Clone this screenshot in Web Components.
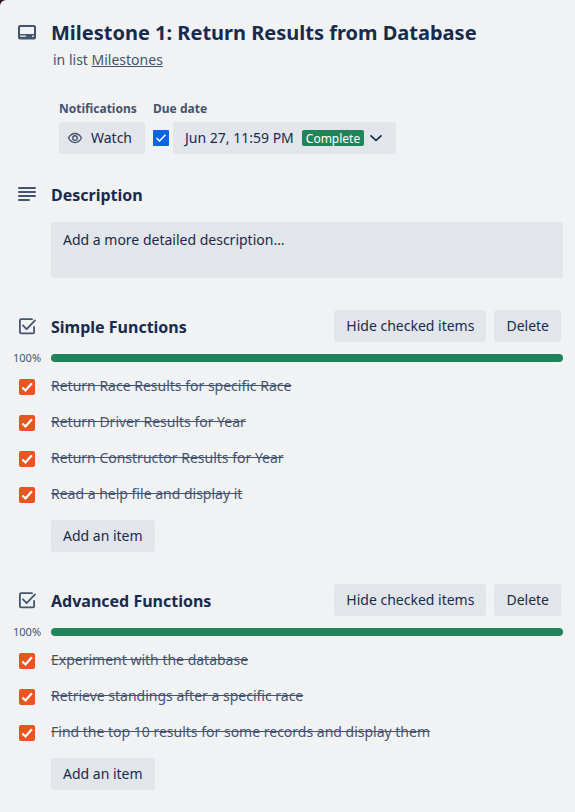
<!DOCTYPE html>
<html lang="en">
<head>
<meta charset="utf-8">
<title>Milestone 1: Return Results from Database</title>
<style>
html{background:#2c0f1e}
body{margin:0;font:400 14px/20px "Noto Sans",sans-serif;color:#172b4d}
</style>
</head>
<body>
<card-detail></card-detail>
<script>
function define(name, html) {
  const template = document.createElement('template');
  template.innerHTML = html;
  customElements.define(name, class extends HTMLElement {
    constructor() {
      super();
      this.attachShadow({ mode: 'open' }).append(template.content.cloneNode(true));
    }
  });
}

define('soft-button', `
<style>
:host{display:inline-flex;box-sizing:border-box;height:32px;padding:0 12px;align-items:center;border-radius:3px;background:#e2e5e9;white-space:nowrap}
</style><slot></slot>`);

define('check-mark', `
<style>
:host{display:block;width:16px;height:16px;border-radius:2px;background:#e95420;flex:none}
svg{display:block}
path{fill:none;stroke:#fff;stroke-width:2.2}
</style><svg width="16" height="16" viewBox="0 0 16 16"><path d="M3.4 8.5 6.5 11.5 12.9 4.3"/></svg>`);

define('due-check', `
<style>
:host{display:block;width:16px;height:16px;border-radius:1px;background:#0c66e4;flex:none}
svg{display:block}
</style><svg width="16" height="16" viewBox="0 0 16 16"><path d="M3.5 8 6.5 11 12.5 4.7" fill="none" stroke="#fff" stroke-width="1.5"/></svg>`);

define('section-heading', `
<style>
:host{display:grid;grid-template-columns:51px 1fr auto;align-items:center;height:32px}
.icon{display:flex;padding-left:15px}
h3{margin:2px 0 0;font-size:16px;line-height:20px;font-weight:700}
.actions{display:flex;gap:8px;padding-right:14px}
</style>
<div class="icon"><slot name="icon"></slot></div><h3><slot></slot></h3><div class="actions"><slot name="actions"></slot></div>`);

define('progress-line', `
<style>
:host{display:grid;grid-template-columns:51px 1fr;height:8px;align-items:center;margin-top:12px;padding-right:12px}
span{font-size:11px;line-height:8px;padding-left:13px;color:#44546f}
div{height:8px;border-radius:4px;background:#1f845a}
</style><span>100%</span><div></div>`);

define('check-item', `
<style>
:host{display:grid;grid-template-columns:32px 1fr;height:36px;padding-left:19px;align-items:center;color:#44546f}
check-mark{margin-top:2px}
span{text-decoration:line-through}
</style><check-mark></check-mark><span><slot></slot></span>`);

define('check-list', `
<style>
:host{display:block;margin-top:32px}
.items{margin-top:6px}
.add{display:flex;padding:8px 0 0 51px}
svg{display:block}
</style>
<section-heading><svg slot="icon" width="24" height="24" viewBox="0 0 24 24" fill="none" stroke="#44546f" stroke-width="1.8" stroke-linecap="round" stroke-linejoin="round"><path d="M17 5.2H6.2Q4.9 5.2 4.9 6.5V18Q4.9 19.3 6.2 19.3H17.8Q19.1 19.3 19.1 18V13"/><path d="M8 11.4 11.6 15.2 20 6.4"/></svg><slot name="title"></slot><soft-button slot="actions">Hide checked items</soft-button><soft-button slot="actions">Delete</soft-button></section-heading>
<progress-line></progress-line>
<div class="items"><slot></slot></div>
<div class="add"><soft-button>Add an item</soft-button></div>`);

define('card-header', `
<style>
:host{display:grid;grid-template-columns:51px 1fr;padding-top:20px}
svg{display:block;margin-left:15px}
h2{margin:0;font-size:20px;line-height:24px;font-weight:700;padding-top:1px;white-space:nowrap}
p{margin:5px 0 0 2px;color:#44546f}
</style>
<svg width="24" height="24" viewBox="0 0 24 24"><rect x="4" y="6" width="16" height="12.4" rx="1" fill="none" stroke="#44546f" stroke-width="2"/><path d="M4 14H20V18H4Z" fill="#44546f"/><path d="M5 16.2H11M17 16.2H19" stroke="#f1f2f4" stroke-width="1.3"/></svg>
<div><h2>Milestone 1: Return Results from Database</h2><p>in list <u>Milestones</u></p></div>`);

define('card-meta', `
<style>
:host{display:flex;gap:8px;padding:29px 0 0 59px}
h4{margin:0 0 3px;font-size:12px;line-height:20px;font-weight:700;color:#44546f}
.due{display:flex;align-items:center;gap:4px}
.watch{padding:0 13px 0 8px}
.watch svg{margin-right:8px}
.date{padding-right:12px}
.badge{margin:0 4px 0 8px;padding:0 4px;height:16px;background:#1f845a;color:#fff;font-size:12px;line-height:17px;border-radius:2px}
svg{display:block}
</style>
<div><h4>Notifications</h4><soft-button class="watch"><svg width="16" height="16" viewBox="0 0 16 16" fill="none" stroke="#44546f" stroke-width="1.35"><path d="M1.5 8C3.1 5 5.4 3.5 8 3.5S12.9 5 14.5 8C12.9 11 10.6 12.5 8 12.5S3.1 11 1.5 8Z"/><circle cx="8" cy="8" r="2.3"/></svg>Watch</soft-button></div>
<div><h4>Due date</h4><div class="due"><due-check></due-check><soft-button class="date">Jun 27, 11:59 PM<span class="badge">Complete</span><svg width="16" height="16" viewBox="0 0 16 16"><path d="M3 5.8 8 10.5 13 5.8" fill="none" stroke="#172b4d" stroke-width="1.7" stroke-linecap="round" stroke-linejoin="round"/></svg></soft-button></div></div>`);

define('card-description', `
<style>
:host{display:block;margin-top:24px}
.box{box-sizing:border-box;height:56px;margin:12px 12px 0 51px;padding:8px 12px;background:#e2e5e9;border-radius:3px}
</style>
<section-heading><svg slot="icon" width="24" height="24" viewBox="0 0 24 24" stroke="#44546f" stroke-width="2" stroke-linecap="round"><path d="M4 6H20M4 10H20M4 14H20M4 18H14"/></svg>Description</section-heading>
<div class="box">Add a more detailed description…</div>`);

define('card-detail', `
<style>
:host{display:block;height:812px;overflow:hidden;background:#f1f2f4;border-top-left-radius:6px}
</style>
<card-header></card-header>
<card-meta></card-meta>
<card-description></card-description>
<check-list><span slot="title">Simple Functions</span>
<check-item>Return Race Results for specific Race</check-item>
<check-item>Return Driver Results for Year</check-item>
<check-item>Return Constructor Results for Year</check-item>
<check-item>Read a help file and display it</check-item></check-list>
<check-list><span slot="title">Advanced Functions</span>
<check-item>Experiment with the database</check-item>
<check-item>Retrieve standings after a specific race</check-item>
<check-item>Find the top 10 results for some records and display them</check-item></check-list>`);
</script>
</body>
</html>
